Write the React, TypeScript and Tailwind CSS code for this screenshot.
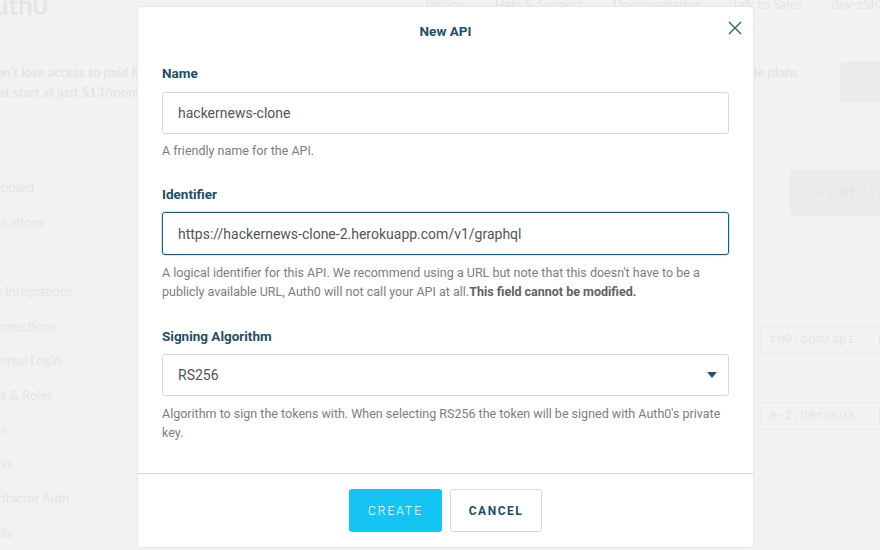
import React, { useState } from 'react';

const sideItems = [
  { label: 'Dashboard', cls: 'pl-[2px]' },
  { label: 'Applications', cls: 'pl-[4px]' },
  { label: 'SSO Integrations', cls: 'pl-[7px] mt-[35px]' },
  { label: 'Connections', cls: 'pl-[14px]' },
  { label: 'Universal Login', cls: 'pl-[4px]' },
  { label: 'Users & Roles', cls: 'pl-[4px]' },
  { label: 'Rules', cls: 'pl-[6px]' },
  { label: 'Hooks', cls: 'pl-[6px]' },
  { label: 'Multifactor Auth', cls: 'pl-[5px]' },
  { label: 'Emails', cls: 'pl-[6px]' },
];

function Backdrop() {
  return (
    <div className="h-[550px] w-[880px] overflow-hidden bg-[#f3f2f1] text-[#e5e4e2] font-['Lato',sans-serif]">
      <div className="flex h-[22px] items-start">
        <div className="ml-[-24px] mt-[-10px] text-[26px] font-bold leading-[30px]">Auth0</div>
        <div className="ml-auto mr-[-20px] mt-[-2px] flex gap-[30px] text-[13px] leading-[12px]">
          <span>Pricing</span>
          <span>Help &amp; Support</span>
          <span>Documentation</span>
          <span>Talk to Sales</span>
          <span>dev-z5h3dp</span>
        </div>
      </div>
      <div className="mt-[40px] flex items-start">
        <div className="ml-[-14px] w-[729px] shrink-0 text-[13px] font-bold leading-[20px]">
          <div>Don&apos;t lose access to paid features. Upgrade</div>
          <div>that start at just $13/month</div>
        </div>
        <div className="text-[13px] font-bold leading-[20px]">Upgrade plans</div>
        <div className="ml-auto mr-[-40px] h-[40px] w-[80px] shrink-0 rounded bg-[#ecebe9]" />
      </div>
      <div className="flex">
        <div className="ml-[-30px] mt-[68px] flex flex-col text-[13px] leading-[34.5px]">
          {sideItems.map((s) => (
            <div key={s.label} className={s.cls}>
              {s.label}
            </div>
          ))}
        </div>
        <div className="ml-auto flex flex-col items-end">
          <div className="mt-[68px] mr-[-30px] flex h-[46px] w-[120px] items-center gap-2 rounded bg-[#ecebe9] pl-[24px] text-[13px] tracking-[2px]">
            + CREATE
          </div>
          <div className="mt-[110px] mr-[-20px] flex h-[28px] w-[140px] items-center justify-between border border-[#ecebe9] px-2 font-['Liberation_Mono',monospace] text-[13px]">
            th0.com/api <span className="h-3 w-3 border border-[#e5e4e2]" />
          </div>
          <div className="mt-[48px] mr-[-20px] flex h-[28px] w-[140px] items-center justify-between border border-[#ecebe9] px-2 font-['Liberation_Mono',monospace] text-[13px]">
            e-2.herokua <span className="h-3 w-3 border border-[#e5e4e2]" />
          </div>
        </div>
      </div>
    </div>
  );
}

export default function App() {
  const [name, setName] = useState('hackernews-clone');
  const [identifier, setIdentifier] = useState('https://hackernews-clone-2.herokuapp.com/v1/graphql');
  const [algorithm, setAlgorithm] = useState('RS256');

  return (
    <div className="relative h-[550px] w-[880px] overflow-hidden font-['Roboto',sans-serif]">
      <Backdrop />

      {/* modal */}
      <div className="absolute left-[138px] top-[7px] w-[615px] rounded-[3px] bg-white shadow-[0_0_0_1px_#e8e7e5]">
        <button className="absolute right-[11px] top-[14px] text-[#2d5a72]">
          <svg width="14" height="14" viewBox="0 0 14 14" fill="none" stroke="currentColor" strokeWidth="1.3">
            <path d="M1 1 L13 13 M13 1 L1 13" />
          </svg>
        </button>
        <div className="pt-[14px] text-center text-[13.5px] font-bold leading-[20px] text-[#1f4e66]">New API</div>

        <div className="px-[24px] pt-[22px] pb-[31px]">
          <label className="block text-[13.5px] font-bold leading-[20px] text-[#1f4e66]">Name</label>
          <input
            value={name}
            onChange={(e) => setName(e.target.value)}
            className="mt-[9px] block h-[42px] w-full rounded-[3px] border border-[#d6d6d6] px-[15px] text-[14px] text-[#555] outline-none"
          />
          <p className="mt-[7px] text-[12.5px] leading-[19px] text-[#7d7d7d]">A friendly name for the API.</p>

          <label className="mt-[24px] block text-[13.5px] font-bold leading-[20px] text-[#1f4e66]">Identifier</label>
          <input
            value={identifier}
            onChange={(e) => setIdentifier(e.target.value)}
            className="mt-[8px] block h-[43px] w-full rounded-[3px] border-[1.5px] border-[#1f5672] px-[15px] text-[14px] text-[#555] outline-none shadow-[0_0_2px_#3ab7e6]"
          />
          <p className="mt-[8px] text-[12.5px] leading-[19px] text-[#7d7d7d]">
            A logical identifier for this API. We recommend using a URL but note that this doesn&apos;t have to be a
            publicly available URL, Auth0 will not call your API at all.
            <strong className="font-bold text-[#626262]">This field cannot be modified.</strong>
          </p>

          <label className="mt-[25px] block text-[13.5px] font-bold leading-[20px] text-[#1f4e66]">
            Signing Algorithm
          </label>
          <div className="relative mt-[8px]">
            <select
              value={algorithm}
              onChange={(e) => setAlgorithm(e.target.value)}
              className="block h-[42px] w-full appearance-none rounded-[3px] border border-[#d6d6d6] bg-white px-[15px] text-[14px] text-[#555] outline-none"
            >
              <option>RS256</option>
              <option>HS256</option>
            </select>
            <svg
              className="pointer-events-none absolute right-[12px] top-[18px]"
              width="10"
              height="6"
              viewBox="0 0 10 6"
            >
              <path d="M0 0 H10 L5 6 Z" fill="#1f5672" />
            </svg>
          </div>
          <p className="mt-[8px] text-[12.5px] leading-[19px] text-[#7d7d7d]">
            Algorithm to sign the tokens with. When selecting RS256 the token will be signed with Auth0&apos;s private
            key.
          </p>
        </div>

        <div className="flex justify-center gap-[8px] border-t border-[#d9d9d9] pt-[15px] pb-[15px]">
          <button className="h-[43px] w-[93px] rounded-[3px] bg-[#16c4f4] text-[12px] font-light tracking-[2px] text-white">
            CREATE
          </button>
          <button className="h-[43px] w-[92px] rounded-[3px] border border-[#dcdcdc] bg-white text-[12px] font-bold tracking-[1.5px] text-[#1f4e66]">
            CANCEL
          </button>
        </div>
      </div>
    </div>
  );
}
